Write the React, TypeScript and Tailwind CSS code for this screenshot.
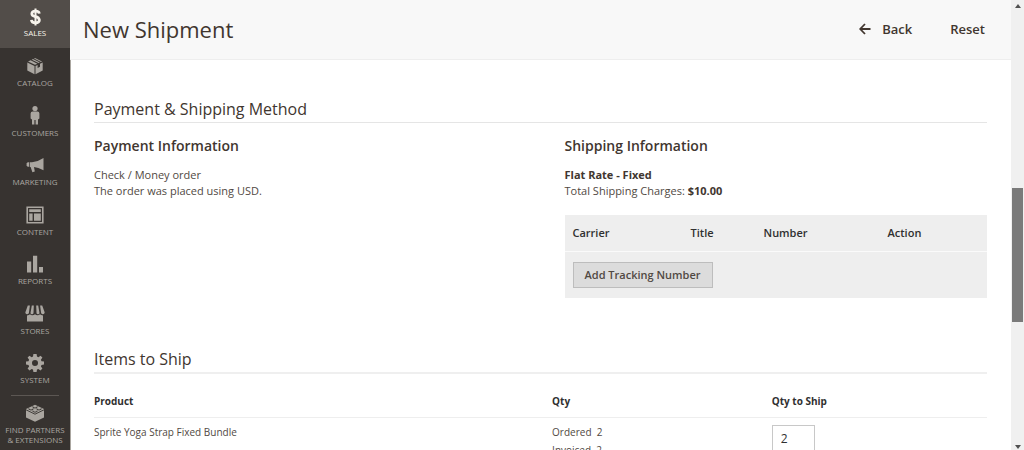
import React from 'react'

interface MenuItem {
  label: string
  icon: React.ReactNode
}

const menuItems: MenuItem[] = [
  {
    label: 'CATALOG',
    icon: (
      <svg width="16" height="18" viewBox="0 0 16 18" fill="currentColor" aria-hidden="true">
        <path d="M1 4.6 3.6 3.3 10.4 6.7 8 7.8Z" />
        <path d="M4.8 2.7 6 2.1 12.9 5.5 11.6 6.1Z" />
        <path d="M7 1.6 8 1.1 15 4.6 14 5Z" />
        <path d="M.3 5.6 7.5 8.9V17.2L.3 13.5Z" />
        <path d="M8.5 8.9 10.6 7.9V11L13 9.8V6.8L15.7 5.6V13.5L8.5 17.2Z" />
      </svg>
    ),
  },
  {
    label: 'CUSTOMERS',
    icon: (
      <svg width="10" height="20" viewBox="0 0 10 20" fill="currentColor" aria-hidden="true">
        <circle cx="5" cy="2.6" r="2.6" />
        <path d="M2.6 5.6H7.4Q9.4 5.6 9.4 7.6V12.6L8 13.4V18.6H5.6V14H4.4V18.6H2V13.4L.6 12.6V7.6Q.6 5.6 2.6 5.6Z" />
      </svg>
    ),
  },
  {
    label: 'MARKETING',
    icon: (
      <svg width="18" height="16" viewBox="0 0 18 16" fill="currentColor" aria-hidden="true">
        <path d="M17.5 1V13.2Q12 10.4 8 10L8.8 14.6 6.4 15.2 4.6 10H4V5.2H6Q12 4.8 17.5 1Z" />
        <path d="M3.3 5.3V9.8H1.6L.6 8.6V6.5L1.6 5.3Z" />
      </svg>
    ),
  },
  {
    label: 'CONTENT',
    icon: (
      <svg width="18" height="18" viewBox="0 0 18 18" fill="currentColor" aria-hidden="true">
        <path fillRule="evenodd" d="M.4.4H17.6V17.6H.4ZM2 2V16H16V2Z" />
        <path d="M3.2 3.2H14.8V6H3.2ZM3.2 7.4H6.6V14.8H3.2ZM8 7.4H14.8V14.8H8Z" />
      </svg>
    ),
  },
  {
    label: 'REPORTS',
    icon: (
      <svg width="16" height="18" viewBox="0 0 16 18" fill="currentColor" aria-hidden="true">
        <path d="M0 6.5H4.2V17.5H0ZM6 .8H10.2V17.5H6ZM12 12H16V17.5H12Z" />
      </svg>
    ),
  },
  {
    label: 'STORES',
    icon: (
      <svg width="20" height="17" viewBox="0 0 20 17" fill="currentColor" aria-hidden="true">
        <path d="M2.8.6H4.9L3.9 8Q3.5 9.3 2 9.3T.3 7.6ZM6.8.6H8.8L8.5 8Q8.4 9.3 7 9.3T5.5 8ZM11.2.6H13.2L14.5 8Q14.5 9.3 13 9.3T11.5 8ZM15.1.6H17.2L19.7 7.6Q19.4 9.3 18 9.3T16.1 8Z" />
        <path d="M2 10.4Q4.2 10.4 5 9.3 6 10.4 7.4 10.3 9 10.2 10 9.2 11 10.2 12.6 10.3 14 10.4 15 9.3 16 10.4 18 10.4V16.4H2Z" />
      </svg>
    ),
  },
  {
    label: 'SYSTEM',
    icon: (
      <svg width="18" height="18" viewBox="0 0 18 18" fill="currentColor" aria-hidden="true">
        <path
          fillRule="evenodd"
          d="M7.4 0H10.6L11 2.6 12.4 3.2 14.5 1.7 16.4 3.6 14.9 5.7 15.5 7.2 18 7.5V10.5L15.5 10.9 14.9 12.4 16.4 14.5 14.5 16.4 12.4 14.9 11 15.5 10.6 18H7.4L7 15.5 5.6 14.9 3.5 16.4 1.6 14.5 3.1 12.4 2.5 10.9 0 10.5V7.5L2.5 7.2 3.1 5.7 1.6 3.6 3.5 1.7 5.6 3.2 7 2.6ZM9 6A3 3 0 1 0 9 12 3 3 0 0 0 9 6Z"
        />
      </svg>
    ),
  },
]

const partnersIcon = (
  <svg width="18" height="18" viewBox="0 0 18 18" fill="currentColor" aria-hidden="true">
    <path d="M0 5 9 .8 18 5V13.4L9 17.8 0 13.4Z" />
    <g fill="none" stroke="#373330" strokeWidth=".9">
      <path d="M0 5.8 9 10.2 18 5.8" />
      <path d="M6.8 2.4V3.2Q9 4.9 11.2 3.2V2.4M2.8 4.4V5.2Q5 6.9 7.2 5.2V4.4M10.8 4.4V5.2Q13 6.9 15.2 5.2V4.4M6.8 6.6V7.4Q9 9.1 11.2 7.4V6.6" />
    </g>
  </svg>
)

const Sidebar: React.FC = () => (
  <nav className="flex w-[70px] shrink-0 flex-col bg-[#373330] text-center text-[8px] leading-[10px] text-[#aaa6a0] shadow-[1px_0_0_#aaa6a0]">
    <a href="#sales" className="flex h-12 flex-col items-center bg-[#524d49] pt-2 text-[#f7f3eb]">
      <svg width="11" height="18" viewBox="0 0 11 18" fill="none" stroke="currentColor" aria-hidden="true">
        <path d="M5.5.5V17.5" strokeWidth="2" />
        <path d="M9.3 5.6Q9.1 3.1 5.5 3.1T1.8 5.7Q1.8 7.9 5.4 8.6T9.4 12Q9.4 14.8 5.5 14.8T1.4 11.8" strokeWidth="2.7" />
      </svg>
      <span className="mt-[2px]">SALES</span>
    </a>
    {menuItems.map((item) => (
      <a
        key={item.label}
        href={`#${item.label.toLowerCase()}`}
        className="flex flex-1 flex-col items-center hover:bg-[#4a4542]"
      >
        <span className="flex h-[30px] pt-2">
          <span className="flex h-5 items-center">{item.icon}</span>
        </span>
        {item.label}
      </a>
    ))}
    <a href="#partners" className="flex h-[55px] flex-col items-center">
      <span className="h-px w-12 shrink-0 bg-[#5c5753]" />
      <span className="mt-2 h-[21px]">{partnersIcon}</span>
      <span className="whitespace-nowrap">
        FIND PARTNERS
        <br />
        &amp; EXTENSIONS
      </span>
    </a>
  </nav>
)

const PageHeader: React.FC = () => (
  <header className="flex h-[60px] shrink-0 items-center justify-between border-b border-[#eeeeee] bg-[#f8f8f8] pr-[26px] pb-[2px] pl-[13px] text-[#41362f]">
    <h1 className="text-[22px] leading-[30px]">New Shipment</h1>
    <div className="flex items-center gap-[38px] text-[13px] leading-5 font-semibold">
      <button type="button" className="flex items-center gap-[11px]">
        <svg width="12" height="12" viewBox="0 0 12 12" fill="none" stroke="currentColor" strokeWidth="1.8" aria-hidden="true">
          <path d="M6 1 1.2 6 6 11M1.2 6H11.5" />
        </svg>
        Back
      </button>
      <button type="button">Reset</button>
    </div>
  </header>
)

const PaymentAndShipping: React.FC = () => (
  <section>
    <h2 className="border-b border-[#e5e5e5] pb-px text-[16px] leading-6 text-[#41362f]">
      Payment &amp; Shipping Method
    </h2>
    <div className="mt-[11px] grid grid-cols-[470fr_422fr] text-[11px] leading-4">
      <div>
        <h3 className="mb-[9px] text-[14px] leading-6 font-semibold text-[#41362f]">Payment Information</h3>
        <p>Check / Money order</p>
        <p>The order was placed using USD.</p>
      </div>
      <div>
        <h3 className="mb-[9px] text-[14px] leading-6 font-semibold text-[#41362f]">Shipping Information</h3>
        <p className="font-bold text-[#41362f]">Flat Rate - Fixed</p>
        <p>
          Total Shipping Charges: <strong className="text-[#41362f]">$10.00</strong>
        </p>
        <table className="mt-4 w-full table-fixed bg-[#eeeeee] text-left">
          <colgroup>
            <col className="w-[118px]" />
            <col className="w-[73px]" />
            <col className="w-[124px]" />
            <col />
          </colgroup>
          <thead className="text-[#303030]">
            <tr className="h-9 border-b border-[#fafafa]">
              <th className="px-2 font-semibold">Carrier</th>
              <th className="px-2 font-semibold">Title</th>
              <th className="px-2 font-semibold">Number</th>
              <th className="px-2 font-semibold">Action</th>
            </tr>
          </thead>
          <tbody>
            <tr>
              <td colSpan={4} className="px-2 py-[10px]">
                <button
                  type="button"
                  className="block border border-[#bdbdbd] bg-[#dcdcdc] px-[11px] py-1 font-semibold text-[#514943]"
                >
                  Add Tracking Number
                </button>
              </td>
            </tr>
          </tbody>
        </table>
      </div>
    </div>
  </section>
)

const ItemsToShip: React.FC = () => (
  <section className="mt-[49px]">
    <h2 className="border-b-2 border-[#efefef] pb-px text-[16px] leading-6 text-[#41362f]">Items to Ship</h2>
    <table className="mt-3 w-full table-fixed text-left text-[10px] leading-[18px]">
      <colgroup>
        <col className="w-[51.3%]" />
        <col className="w-[24.6%]" />
        <col />
      </colgroup>
      <thead className="text-[#303030]">
        <tr className="h-8 border-b border-[#eeeeee]">
          <th className="font-bold">Product</th>
          <th className="font-bold">Qty</th>
          <th className="font-bold">Qty to Ship</th>
        </tr>
      </thead>
      <tbody>
        <tr className="align-top">
          <td className="pt-[5px]">Sprite Yoga Strap Fixed Bundle</td>
          <td className="pt-[5px]">
            <p>Ordered&nbsp; 2</p>
            <p>Invoiced&nbsp; 2</p>
          </td>
          <td className="pt-[7px]">
            <input
              type="text"
              aria-label="Qty to Ship"
              defaultValue="2"
              className="block h-[26px] w-[43px] border border-[#c8c8c8] px-2 text-[12px] text-[#303030]"
            />
          </td>
        </tr>
      </tbody>
    </table>
  </section>
)

const ScrollTrack: React.FC = () => (
  <div className="flex w-[13px] shrink-0 flex-col items-center bg-[#f0f0f0] text-[#505050]" aria-hidden="true">
    <svg className="mt-1" width="6" height="4" viewBox="0 0 6 4" fill="currentColor">
      <path d="M0 4 3 0 6 4Z" />
    </svg>
    <div className="flex w-full grow flex-col items-center">
      <div className="grow-[180]" />
      <div className="w-[11px] grow-[134] bg-[#7a7a7a]" />
      <div className="grow-[123]" />
    </div>
    <svg className="mb-px" width="6" height="4" viewBox="0 0 6 4" fill="currentColor">
      <path d="M0 0 3 4 6 0Z" />
    </svg>
  </div>
)

const App: React.FC = () => (
  <div className="flex h-screen overflow-hidden bg-white font-['Open_Sans','Noto_Sans',sans-serif] text-[#514943]">
    <Sidebar />
    <div className="flex min-w-0 flex-1 flex-col">
      <PageHeader />
      <main className="min-h-0 flex-1 overflow-hidden px-6 pt-[37px]">
        <PaymentAndShipping />
        <ItemsToShip />
      </main>
    </div>
    <ScrollTrack />
  </div>
)

export default App
